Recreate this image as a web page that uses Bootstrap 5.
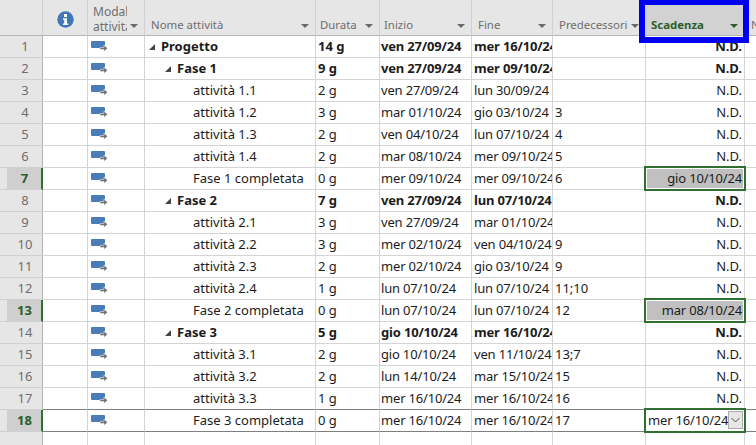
<!DOCTYPE html>
<html lang="it">
<head>
  <meta charset="UTF-8">
  <title>Scadenza</title>
  <link href="https://cdn.jsdelivr.net/npm/bootstrap@5.3.0/dist/css/bootstrap.min.css" rel="stylesheet">
  <style>
    html, body { height: 445px; overflow: hidden; background: #fff; }
    .sheet-wrap { position: relative; width: 756px; height: 445px; overflow: hidden; }
    .sheet { table-layout: fixed; width: 770px; margin: 0; border-collapse: separate; border-spacing: 0; font: 13px/21px "Noto Sans", "Open Sans", sans-serif; color: #1c1c1c; }
    .sheet th, .sheet td { padding: 0 0 0 2px; border: 0; border-right: 1px solid #d4d4d4; border-bottom: 1px solid #d4d4d4; white-space: nowrap; overflow: hidden; box-shadow: none; background: #fff; color: #1c1c1c; height: 22px; vertical-align: middle; }
    .sheet thead th { position: relative; height: 36px; background: #e6e6e6; border-color: #d0d0d0; border-bottom-color: #b5b5b5; font-weight: 400; font-size: 11.4px; line-height: 15px; color: #6e6e6e; vertical-align: bottom; padding: 0 0 3px 6px; }
    .sheet thead th.modal-head { line-height: 15px; padding: 0 17px 1px 5px; font-size: 12px; }
    .sheet thead th.info-head { padding: 0 0 7px; text-align: center; }
    .sheet thead th.tight-head { padding-left: 4px; }
    .sheet thead th.sort::after { content: ""; position: absolute; right: 6px; top: 24px; border: 4px solid transparent; border-top: 4px solid #6a6a6a; border-bottom: 0; }
    .sheet thead th.due-head { background: #d2d2d2; color: #2c5e2c; font-weight: 700; padding-left: 5px; }
    .sheet thead th.due-head::after { border-top-color: #2c5e2c; }
    .sheet td.rownum { background: #e6e6e6; color: #6e6e6e; text-align: center; padding: 0 0 0 8px; border-right-color: #b5b5b5; border-bottom-color: #d0d0d0; }
    .sheet tr.picked td.rownum { color: #2c5e2c; font-weight: 700; background: linear-gradient(90deg, #e6e6e6 7px, #cfcfcf 7px); border-right: 2px solid #2f6f32; }
    .sheet tr.active-row td, .sheet tr.before-active td { border-bottom-color: #7f7f7f; }
    .sheet tr.active-row td.rownum, .sheet tr.before-active td.rownum { border-bottom-color: #d0d0d0; }
    .sheet tr.filler td { height: 14px; border-bottom: 0; }
    .sheet tr.bold-row td:not(.rownum) { font-weight: 700; }
    .sheet td.due { text-align: right; padding-right: 2px; }
    .sheet td.date-start { padding-left: 1px; }
    .date-text { letter-spacing: -.18px; }
    .sheet td.due-cell { position: relative; overflow: visible; }
    .due-box { position: absolute; left: -2px; right: -2px; top: -2px; bottom: -2px; border: 2px solid #2f6f32; background: #fff; padding: 1px; z-index: 2; }
    .due-fill { display: block; height: 100%; background: #c0c0c0; line-height: 19px; text-align: right; padding-right: 1px; }
    .due-edit { display: flex; height: 100%; line-height: 19px; padding-left: 1px; overflow: hidden; background: #fff; }
    .due-edit span { overflow: hidden; flex: 1 1 auto; text-align: left; }
    .drop-btn { flex: 0 0 15px; height: 18px; background: #e6e6e6; border: 1px solid #ababab; display: flex; align-items: center; justify-content: center; }
    .tri { display: inline-block; width: 0; height: 0; border-left: 6px solid transparent; border-bottom: 6px solid #444; margin: 0 6px 1px 0; }
    .lvl-0 { padding-left: 4px !important; }
    .lvl-1 { padding-left: 20px !important; }
    .lvl-2 { padding-left: 48px !important; }
    .mode-ico { display: block; margin: 0 0 0 1px; }
    .focus-box { position: absolute; left: 639px; top: -1px; width: 110px; height: 44px; border: 6px solid #0000f0; pointer-events: none; z-index: 3; }
  </style>
</head>
<body>
  <div class="sheet-wrap">
    <table class="table sheet">
      <colgroup>
        <col style="width:43px"><col style="width:45px"><col style="width:57px"><col style="width:171px"><col style="width:64px"><col style="width:92px"><col style="width:81px"><col style="width:93px"><col style="width:99px"><col style="width:25px">
      </colgroup>
      <thead>
        <tr>
          <th></th>
          <th class="info-head">
            <svg width="17" height="17" viewBox="0 0 17 17" class="d-block mx-auto"><circle cx="8.5" cy="8.5" r="8.2" fill="#3f78b5"/><rect x="7" y="3" width="3" height="3" fill="#fff"/><path d="M6 7.2h4v5.3h1.2v1.6H6v-1.6h1.2V8.8H6z" fill="#fff"/></svg>
          </th>
          <th class="sort modal-head"><span class="d-block overflow-hidden">Modal<br>attività</span></th>
          <th class="sort">Nome attività</th>
          <th class="sort tight-head">Durata</th>
          <th class="sort tight-head">Inizio</th>
          <th class="sort">Fine</th>
          <th class="sort">Predecessori</th>
          <th class="sort due-head">Scadenza</th>
          <th>N</th>
        </tr>
      </thead>
      <tbody id="rows"></tbody>
    </table>
    <div class="focus-box"></div>
  </div>

  <script>
    // name, level (2 = plain task), durata, inizio, fine, pred, scadenza, cell state
    const data = [
      ['Progetto', 0, '14 g', 'ven 27/09/24', 'mer 16/10/24', '', 'N.D.'],
      ['Fase 1', 1, '9 g', 'ven 27/09/24', 'mer 09/10/24', '', 'N.D.'],
      ['attività 1.1', 2, '2 g', 'ven 27/09/24', 'lun 30/09/24', '', 'N.D.'],
      ['attività 1.2', 2, '3 g', 'mar 01/10/24', 'gio 03/10/24', '3', 'N.D.'],
      ['attività 1.3', 2, '2 g', 'ven 04/10/24', 'lun 07/10/24', '4', 'N.D.'],
      ['attività 1.4', 2, '2 g', 'mar 08/10/24', 'mer 09/10/24', '5', 'N.D.'],
      ['Fase 1 completata', 2, '0 g', 'mer 09/10/24', 'mer 09/10/24', '6', 'gio 10/10/24', 'fill'],
      ['Fase 2', 1, '7 g', 'ven 27/09/24', 'lun 07/10/24', '', 'N.D.'],
      ['attività 2.1', 2, '3 g', 'ven 27/09/24', 'mar 01/10/24', '', 'N.D.'],
      ['attività 2.2', 2, '3 g', 'mer 02/10/24', 'ven 04/10/24', '9', 'N.D.'],
      ['attività 2.3', 2, '2 g', 'mer 02/10/24', 'gio 03/10/24', '9', 'N.D.'],
      ['attività 2.4', 2, '1 g', 'lun 07/10/24', 'lun 07/10/24', '11;10', 'N.D.'],
      ['Fase 2 completata', 2, '0 g', 'lun 07/10/24', 'lun 07/10/24', '12', 'mar 08/10/24', 'fill'],
      ['Fase 3', 1, '5 g', 'gio 10/10/24', 'mer 16/10/24', '', 'N.D.'],
      ['attività 3.1', 2, '2 g', 'gio 10/10/24', 'ven 11/10/24', '13;7', 'N.D.'],
      ['attività 3.2', 2, '2 g', 'lun 14/10/24', 'mar 15/10/24', '15', 'N.D.'],
      ['attività 3.3', 2, '1 g', 'mer 16/10/24', 'mer 16/10/24', '16', 'N.D.'],
      ['Fase 3 completata', 2, '0 g', 'mer 16/10/24', 'mer 16/10/24', '17', 'mer 16/10/24', 'edit']
    ];
    const modeIcon = '<svg class="mode-ico" width="17" height="11" viewBox="0 0 17 11"><rect x="0" y="0" width="14" height="7" rx="1" fill="#4a7db8"/><path d="M9 6.5h4V4l3.5 3.2-3.5 3.3V8.5H9z" fill="#6f6f6f" stroke="#fff" stroke-width=".5"/></svg>';
    const chevron = '<svg width="9" height="6" viewBox="0 0 9 6"><path d="M.5 1l4 4 4-4" fill="none" stroke="#555"/></svg>';
    const tbody = document.getElementById('rows');

    data.forEach((d, i) => {
      const [name, lvl, dur, start, end, pred, due, mode] = d;
      const next = data[i + 1];
      const row = document.createElement('tr');
      const cls = [];
      if (lvl < 2) cls.push('bold-row');
      if (mode) cls.push('picked');
      if (mode === 'edit') cls.push('active-row');
      if (next && next[7] === 'edit') cls.push('before-active');
      row.className = cls.join(' ');

      let dueCell = `<td class="due">${due}</td>`;
      if (mode === 'fill') dueCell = `<td class="due-cell"><div class="due-box"><span class="due-fill date-text">${due}</span></div></td>`;
      if (mode === 'edit') dueCell = `<td class="due-cell"><div class="due-box"><div class="due-edit"><span class="date-text">${due}</span><div class="drop-btn">${chevron}</div></div></div></td>`;

      row.innerHTML = `<td class="rownum">${i + 1}</td><td></td><td>${modeIcon}</td>`
        + `<td class="lvl-${lvl}">${lvl < 2 ? '<i class="tri"></i>' : ''}${name}</td>`
        + `<td>${dur}</td><td class="date-start date-text">${start}</td><td class="date-text">${end}</td><td>${pred}</td>${dueCell}<td></td>`;
      tbody.appendChild(row);
    });

    const filler = document.createElement('tr');
    filler.className = 'filler';
    filler.innerHTML = '<td class="rownum"></td>' + '<td></td>'.repeat(9);
    tbody.appendChild(filler);
  </script>
  <script src="https://cdn.jsdelivr.net/npm/bootstrap@5.3.0/dist/js/bootstrap.bundle.min.js"></script>
</body>
</html>
